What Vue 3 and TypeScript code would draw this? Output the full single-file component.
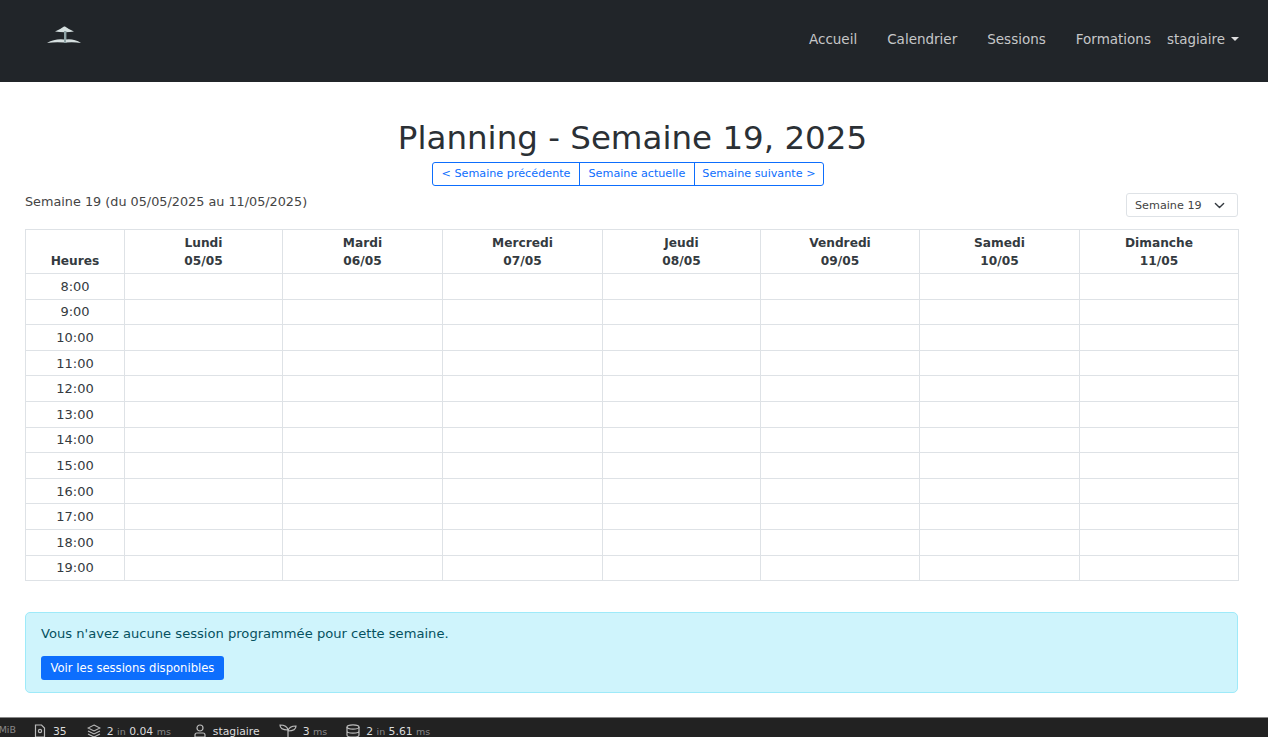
<script setup lang="ts">
const links = ["Accueil", "Calendrier", "Sessions", "Formations"];
const days = [
  { name: "Lundi", date: "05/05" },
  { name: "Mardi", date: "06/05" },
  { name: "Mercredi", date: "07/05" },
  { name: "Jeudi", date: "08/05" },
  { name: "Vendredi", date: "09/05" },
  { name: "Samedi", date: "10/05" },
  { name: "Dimanche", date: "11/05" },
];
const hours = Array.from({ length: 12 }, (_, i) => `${i + 8}:00`);
const widths = [99, 158, 160, 160, 158, 159, 160, 159];
</script>

<template>
  <div class="page">
    <nav class="navbar">
      <svg class="logo" width="38" height="20" viewBox="0 0 38 20">
        <path d="M9 7.5 Q14 5.5 18 2.5 L19 2.5 Q23 5.5 28 7.5 Q19 8.8 9 7.5Z" fill="#d6e0e0" />
        <rect x="18" y="7" width="2.4" height="12" fill="#8ea3a5" />
        <path d="M1 19 Q9 14.5 18 15.5 L18 18.5 Q9 17.8 1 19Z" fill="#d6e0e0" />
        <path d="M35 19 Q28 14.5 20 15.5 L20 18.5 Q28 17.8 35 19Z" fill="#d6e0e0" />
      </svg>
      <ul class="nav-links">
        <li v-for="link in links" :key="link">{{ link }}</li>
      </ul>
      <div class="user">stagiaire<span class="caret" /></div>
    </nav>

    <main class="content">
      <h1>Planning - Semaine 19, 2025</h1>
      <div class="btn-group">
        <a>&lt; Semaine précédente</a>
        <a>Semaine actuelle</a>
        <a>Semaine suivante &gt;</a>
      </div>
      <div class="week-row">
        <span class="week-label">Semaine 19 (du 05/05/2025 au 11/05/2025)</span>
        <div class="select">
          Semaine 19
          <svg width="11" height="11" viewBox="0 0 16 16" fill="none" stroke="#343a40" stroke-width="2" stroke-linecap="round" stroke-linejoin="round"><path d="M2 5l6 6 6-6" /></svg>
        </div>
      </div>

      <table>
        <colgroup>
          <col v-for="(w, i) in widths" :key="i" :style="{ width: w + 'px' }" />
        </colgroup>
        <thead>
          <tr>
            <th>Heures</th>
            <th v-for="d in days" :key="d.name">{{ d.name }}<br />{{ d.date }}</th>
          </tr>
        </thead>
        <tbody>
          <tr v-for="h in hours" :key="h">
            <td>{{ h }}</td>
            <td v-for="d in days" :key="d.name" />
          </tr>
        </tbody>
      </table>

      <div class="alert">
        <p>Vous n'avez aucune session programmée pour cette semaine.</p>
        <a class="btn-primary">Voir les sessions disponibles</a>
      </div>
    </main>

    <footer class="toolbar">
      <span class="item first"><span class="dim">MiB</span></span>
      <span class="item">
        <svg width="14" height="14" viewBox="0 0 14 14" fill="none" stroke="#bbb" stroke-width="1.2"><path d="M2.5 1h6l3 3v9h-9z" /><circle cx="7" cy="7" r="1.6" /></svg>
        35
      </span>
      <span class="item">
        <svg width="14" height="14" viewBox="0 0 14 14" fill="none" stroke="#bbb" stroke-width="1.1"><path d="M7 1l6 3-6 3-6-3zM1 7l6 3 6-3M1 10l6 3 6-3" /></svg>
        <span>2 <span class="dim">in</span> 0.04 <span class="dim">ms</span></span>
      </span>
      <span class="item">
        <svg width="14" height="14" viewBox="0 0 14 14" fill="none" stroke="#bbb" stroke-width="1.2"><circle cx="7" cy="4" r="3" /><path d="M2 13v-2q0-2 2-2h6q2 0 2 2v2z" /></svg>
        stagiaire
      </span>
      <span class="item">
        <svg width="18" height="14" viewBox="0 0 18 14" fill="none" stroke="#bbb" stroke-width="1.2"><path d="M9 13V6M9 6Q8 1 1 1q0 5 8 5zM9 7q1-5 8-5 0 5-8 5z" /></svg>
        <span>3 <span class="dim">ms</span></span>
      </span>
      <span class="item">
        <svg width="14" height="14" viewBox="0 0 14 14" fill="none" stroke="#bbb" stroke-width="1.2"><ellipse cx="7" cy="3" rx="6" ry="2.2" /><path d="M1 3v8q0 2.2 6 2.2t6-2.2V3M1 7q0 2.2 6 2.2T13 7" /></svg>
        <span>2 <span class="dim">in</span> 5.61 <span class="dim">ms</span></span>
      </span>
    </footer>
  </div>
</template>

<style>
html,
body {
  margin: 0;
  background: #fff;
  overflow: hidden;
}
</style>

<style scoped>
.page {
  height: 737px;
  display: flex;
  flex-direction: column;
  font-family: "DejaVu Sans", "Noto Sans", sans-serif;
  color: #212529;
  overflow: hidden;
}

.navbar {
  height: 82px;
  flex: none;
  background: #212529;
  display: flex;
  align-items: center;
  padding: 0 29px 4px 46px;
  box-sizing: border-box;
}

.logo {
  margin-top: -10px;
}

.nav-links {
  list-style: none;
  display: flex;
  gap: 30px;
  margin: 0 16px 0 auto;
  padding: 0;
  font-size: 13.5px;
  color: rgba(255, 255, 255, 0.75);
}

.user {
  font-size: 13.4px;
  color: rgba(255, 255, 255, 0.75);
  display: flex;
  align-items: center;
}

.caret {
  margin-left: 6px;
  border-top: 4px solid rgba(255, 255, 255, 0.85);
  border-left: 4px solid transparent;
  border-right: 4px solid transparent;
}

.content {
  flex: 1;
  padding: 37px 30px 0 25px;
  display: flex;
  flex-direction: column;
}

h1 {
  margin: 0;
  padding-left: 2px;
  box-sizing: border-box;
  font-size: 32.5px;
  font-weight: 400;
  line-height: 38px;
  text-align: center;
  width: 1213px;
  color: #2b3035;
}

.btn-group {
  display: flex;
  align-self: center;
  margin: 5px 7px 0 0;
  border: 1px solid #0d6efd;
  border-radius: 3px;
  font-size: 11.2px;
  color: #0d6efd;
  line-height: 22px;
}

.btn-group a {
  padding: 0 8px;
}

.btn-group a:nth-child(2) {
  padding: 0 9px;
}

.btn-group a:nth-child(3) {
  padding: 0 7px;
}

.btn-group a + a {
  border-left: 1px solid #0d6efd;
}

.week-row {
  display: flex;
  justify-content: space-between;
  align-items: flex-start;
  width: 1213px;
  font-size: 12.8px;
  color: #444;
  margin-top: 6px;
}

.week-label {
  line-height: 16px;
  padding-top: 2px;
}

.select {
  height: 24px;
  margin-top: 1px;
  box-sizing: border-box;
  width: 112px;
  border: 1px solid #dee2e6;
  border-radius: 3px;
  font-size: 11.2px;
  display: flex;
  align-items: center;
  justify-content: space-between;
  padding: 0 12px 0 8px;
}

table {
  border-collapse: collapse;
  table-layout: fixed;
  width: 1213px;
  margin-top: 12px;
  font-size: 13px;
  color: #343a40;
}

th,
td {
  border: 1px solid #dee2e6;
  padding: 0;
  text-align: center;
  box-sizing: border-box;
}

th {
  height: 44px;
  font-size: 12.2px;
  font-weight: 600;
  line-height: 18px;
  vertical-align: bottom;
  padding-bottom: 3px;
}

td {
  height: 25.6px;
}

.alert {
  margin-top: 31px;
  width: 1213px;
  box-sizing: border-box;
  height: 81px;
  background: #cff4fc;
  border: 1px solid #9eeaf9;
  border-radius: 5px;
  padding: 12px 15px;
  color: #055160;
  font-size: 13.1px;
}

.alert p {
  margin: 0 0 13px;
  line-height: 18px;
}

.btn-primary {
  display: inline-block;
  background: #0d6efd;
  color: #fff;
  border-radius: 3px;
  font-size: 11.6px;
  line-height: 24px;
  padding: 0 9.5px;
}

.toolbar {
  height: 20px;
  flex: none;
  background: #222;
  border-top: 1px solid #888;
  box-sizing: border-box;
  display: flex;
  align-items: flex-start;
  gap: 20px;
  padding-top: 6px;
  font-size: 10.8px;
  color: #ddd;
  white-space: nowrap;
}

.item {
  display: flex;
  align-items: center;
  gap: 6px;
}

.item:nth-child(4) {
  margin-left: 2px;
}

.item:nth-child(5),
.item:nth-child(6) {
  margin-left: -1px;
}

.item.first {
  width: 16px;
  overflow: hidden;
  justify-content: flex-end;
  margin-right: -3px;
}

.dim {
  color: #888;
  font-size: 9.5px;
}
</style>
